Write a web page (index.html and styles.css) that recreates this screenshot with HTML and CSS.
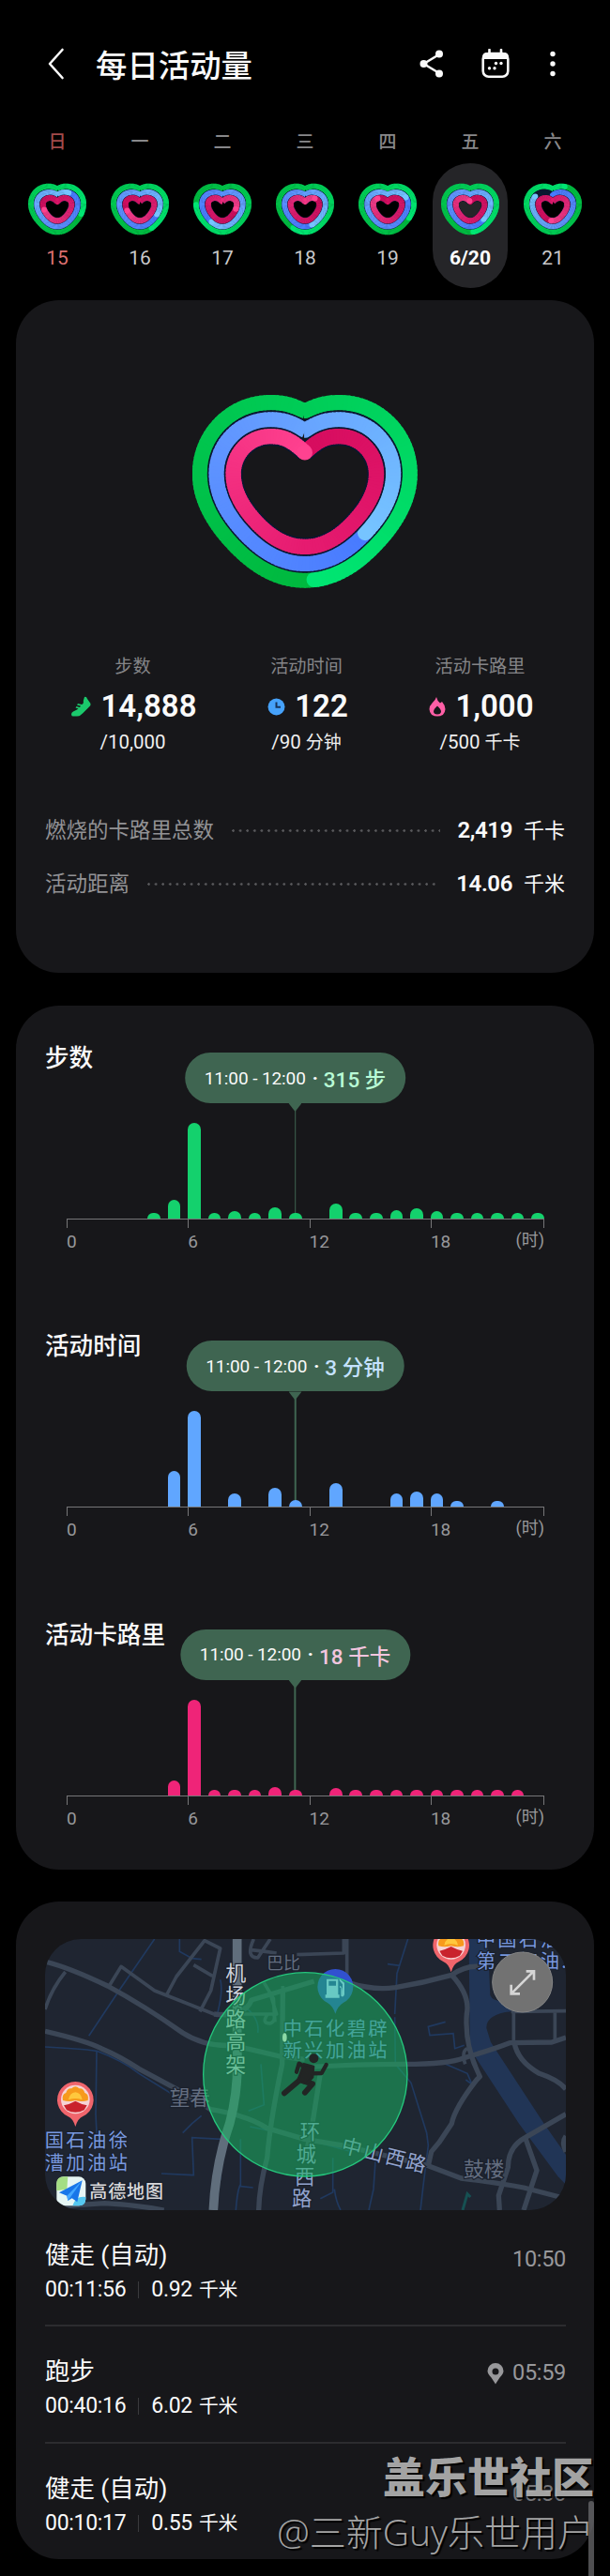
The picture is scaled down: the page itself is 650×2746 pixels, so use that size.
FILE: index.html
```html
<!DOCTYPE html>
<html lang="zh-CN">
<head>
    <meta charset="UTF-8">
    <meta name="viewport" content="width=device-width, initial-scale=1.0">
    <title>每日活动量</title>
    <link rel="stylesheet" href="styles.css">
</head>
<body>
    <header class="topbar">
        <svg class="back" width="18" height="34" viewBox="0 0 18 34"><path d="M15.500 2 L2 17 L15.500 32"/></svg>
        <h1>每日活动量</h1>
        <svg class="share" width="26" height="30" viewBox="0 0 26 30">
            <path d="M21 5 L4.500 15 L21 25"/>
            <circle cx="21" cy="4.500" r="4"/><circle cx="4.500" cy="15" r="4"/><circle cx="21" cy="25.500" r="4"/>
        </svg>
        <svg class="calendar" width="30" height="32" viewBox="0 0 30 32">
            <rect class="box" x="1.700" y="5" width="26.600" height="24.800" rx="6"/>
            <path class="fill" d="M1 11 V9 Q1 4 6 4 H24 Q29 4 29 9 V11 Z"/>
            <path class="box" d="M8.500 1 V6 M21 1 V6"/>
            <circle cx="15.500" cy="15.500" r="1.700"/><circle cx="21" cy="15.500" r="1.700"/>
            <circle cx="8.500" cy="20.700" r="1.700"/><circle cx="14" cy="20.700" r="1.700"/>
        </svg>
        <svg class="more" width="8" height="30" viewBox="0 0 8 30"><circle cx="4" cy="4.500" r="2.700"/><circle cx="4" cy="15" r="2.700"/><circle cx="4" cy="25.500" r="2.700"/></svg>
    </header>

    <nav class="week">
        <div class="day sunday"><span class="name">日</span><div class="pill"><svg class="heart" data-rings="0.3,0.1,0.71"></svg><span class="date">15</span></div></div>
        <div class="day"><span class="name">一</span><div class="pill"><svg class="heart" data-rings="0.42,0.32,0.7"></svg><span class="date">16</span></div></div>
        <div class="day"><span class="name">二</span><div class="pill"><svg class="heart" data-rings="0.76,0.6,0.28"></svg><span class="date">17</span></div></div>
        <div class="day"><span class="name">三</span><div class="pill"><svg class="heart" data-rings="0.58,0.44,0.13"></svg><span class="date">18</span></div></div>
        <div class="day"><span class="name">四</span><div class="pill"><svg class="heart" data-rings="0.33,0.17,0.87"></svg><span class="date">19</span></div></div>
        <div class="day selected"><span class="name">五</span><div class="pill"><svg class="heart" data-rings="0.48,0.37,0.99"></svg><span class="date">6/20</span></div></div>
        <div class="day"><span class="name">六</span><div class="pill"><svg class="heart" data-rings="0.08,-0.84,0.52"></svg><span class="date">21</span></div></div>
    </nav>

    <section class="card summary">
        <svg class="heart big" data-rings="0.485,0.365,1"></svg>
        <div class="stats">
            <div class="stat">
                <span class="label">步数</span>
                <div class="value">
                    <svg width="21" height="22" viewBox="0 0 21 22"><path fill="#1bc96c" d="M14 1 Q16 0 17 3 L20.500 8 Q21 10 19 11.500 L12 18.500 Q9.500 21.500 6 21.500 H2 Q0 21.500 0 19.500 Q0 17.500 2 16.500 L5.500 14.800 L7.500 13.500 L4.500 12.500 L5.500 11 L9 12 L10 10.500 L6 9.500 L7 8 L11 9 Q13.500 8 12.800 5 Z"/></svg>
                    14,888
                </div>
                <span class="goal">/10,000</span>
            </div>
            <div class="stat">
                <span class="label">活动时间</span>
                <div class="value">
                    <svg width="19" height="19" viewBox="0 0 19 19"><circle cx="9.500" cy="9.500" r="9" fill="#46a2fb"/><path d="M9.500 4.500 V9.800 H14" fill="none" stroke="#17345c" stroke-width="2"/></svg>
                    122
                </div>
                <span class="goal">/90 <span class="unit">分钟</span></span>
            </div>
            <div class="stat">
                <span class="label">活动卡路里</span>
                <div class="value">
                    <svg width="18" height="21" viewBox="0 0 18 21"><path fill="#ff5fa6" fill-rule="evenodd" d="M8 0 Q9 4.500 12 6.500 L14 5 Q17.500 9 17.500 13 Q17 20.500 9 20.500 Q1 20.500 .5 13 Q.5 9.500 3.500 6.500 Q7 3.500 8 0 Z M9 9.500 Q5 13 5 15.500 Q5.200 18.500 9 18.500 Q12.800 18.500 13 15.500 Q13 13 9 9.500 Z"/></svg>
                    1,000
                </div>
                <span class="goal">/500 <span class="unit">千卡</span></span>
            </div>
        </div>
        <div class="total"><span class="key">燃烧的卡路里总数</span><i class="dots"></i><b>2,419</b><span class="measure">千卡</span></div>
        <div class="total"><span class="key">活动距离</span><i class="dots"></i><b>14.06</b><span class="measure">千米</span></div>
    </section>

    <section class="card charts">
        <div class="chart steps" data-bars="0,0,0,0,6,20,102,6,8,6,12,6,0,16,6,6,9,11,8,6,6,6,6,6">
            <h2>步数</h2>
            <div class="tip"><span>11:00 - 12:00</span><em>·</em><b>315 步</b></div>
        </div>
        <div class="chart time" data-bars="0,0,0,0,0,38,102,0,14,0,20,7,0,25,0,0,14,16,14,6,0,6,0,0">
            <h2>活动时间</h2>
            <div class="tip"><span>11:00 - 12:00</span><em>·</em><b>3 分钟</b></div>
        </div>
        <div class="chart calories" data-bars="0,0,0,0,0,16,102,6,6,6,9,6,0,8,6,6,6,6,6,6,6,6,6,0">
            <h2>活动卡路里</h2>
            <div class="tip"><span>11:00 - 12:00</span><em>·</em><b>18 千卡</b></div>
        </div>
    </section>

    <section class="card log">
        <svg class="map" viewBox="0 0 1665 867">
            <defs>
                <g id="oil">
                    <path fill="#f0656c" d="M0 142 Q-8 115 -24 109 A58 58 0 1 1 24 109 Q8 115 0 142 Z"/>
                    <circle cy="55" r="46" fill="#f6d3d4"/>
                    <path fill="#f79a1c" d="M-40 58 Q-44 38 -30 34 Q-26 18 -12 20 Q0 8 12 20 Q26 18 30 34 Q44 38 40 58 Q20 64 0 58 Q-20 64 -40 58 Z"/>
                    <path fill="#ffc83d" d="M-22 56 Q-18 34 0 32 Q18 34 22 56 Q0 48 -22 56 Z"/>
                    <path fill="#c9222c" d="M-37 74 Q-18 70 0 60 Q18 70 37 74 L28 89 Q0 104 -28 89 Z"/>
                </g>
            </defs>
            <rect width="1665" height="867" fill="#1f2531"/>
            <!-- river and streams -->
            <g class="water">
                <path d="M1355 0 H1415 L1423 180 Q1435 205 1480 195 L1490 232 Q1410 240 1411 285 L1425 330 L1595 590 L1665 690 V785 L1640 760 L1515 590 L1358 350 Z" stroke="none" fill="#213556"/>
            </g>
            <g class="stream">
                <path d="M0 345 Q110 350 165 358 Q250 390 300 430 L400 492 M350 0 L240 160 L140 310 M165 360 L162 560 L166 640 M430 0 V40 L470 62 L500 65 M560 130 Q570 160 552 235 L548 250 M500 565 L470 590 L440 620 M565 640 L470 635 L475 755 L372 750 L470 755 M625 640 V785 Q615 800 610 867 M620 790 L665 795 M570 640 L560 770"/>
                <path d="M1160 0 L1125 110 L1118 240 M1095 80 L1135 85 M1280 265 L1225 280 L1230 308 L1305 302 L1310 350 L1340 340 M1118 250 L1120 400 L1170 460 L1220 620 L1225 660 L1210 780 L1200 867 M1280 400 L1350 430 L1365 465 L1345 450 M1056 710 L1050 800 L1035 867 M920 700 V810 L880 830 M925 800 Q930 840 945 867 M690 400 L700 530 L650 550"/>
                <path d="M600 190 Q690 240 680 300 M655 600 L780 625 L980 680" />
                <path d="M1335 867 L1350 815 L1360 825" stroke="#165052" stroke-width="9"/>
            </g>
            <g class="road thin">
                <path d="M205 150 L243 88 L350 165 L540 240 L600 248 M388 180 L420 120 L510 5 L560 30 L530 165 L495 232 M475 83 L535 118 M667 0 Q640 60 680 60 L720 0 M660 35 L705 40 L740 45 M0 225 Q20 160 65 105"/>
                <path d="M805 50 L955 45 V0 M965 0 V130 M760 150 V267 M700 140 L730 190 L735 265 M720 175 L740 240 H600 M712 240 Q690 270 720 270 Q740 262 730 235"/>
                <path d="M1498 180 V330 M1490 232 L1665 230 M1630 232 V330 M1343 400 Q1330 360 1350 350"/>
            </g>
            <g class="road">
                <path d="M0 72 Q75 90 200 150 Q320 215 440 300 Q510 345 600 340 Q690 360 750 375 L830 385"/>
                <path d="M0 295 Q130 325 180 350 Q240 375 300 415 L440 490 L530 545 Q650 565 710 605 L830 640 L950 660 L1225 725 L1330 765 Q1450 780 1530 795 L1665 830"/>
                <path d="M540 240 Q640 250 660 195 L860 135 M970 140 Q1050 165 1120 155 Q1210 140 1300 115 Q1350 80 1400 90"/>
                <path d="M830 410 Q1000 400 1150 400 Q1290 400 1340 380 Q1440 350 1485 332 L1620 330 L1665 315"/>
                <path d="M1300 115 Q1360 180 1348 240 Q1340 340 1390 440 L1380 450 Q1310 540 1300 590 L1260 650 L1235 680 L1225 725"/>
                <path d="M1500 330 Q1510 390 1580 430 Q1640 450 1665 480 M1665 560 L1535 635 Q1480 665 1480 730 L1450 820 L1453 867 M1535 635 L1572 740 L1530 867 M1665 630 Q1650 650 1665 680"/>
                <path d="M760 170 L758 400 Q720 580 710 700 Q685 790 683 867 M880 430 L850 620 L830 700"/>
                <path d="M0 860 Q100 850 190 845 Q290 850 380 867"/>
            </g>
            <path d="M614 0 V350 Q620 480 590 590 Q545 720 538 867" class="highway"/>
            <text class="grey" x="708" y="97">巴比</text>
            <text class="grey large" x="398" y="530">望春</text>
            <text class="grey large" x="1338" y="758">鼓楼</text>
            <g class="poi">
                <text x="-1" y="667">国石油徐</text><text x="-1" y="738">漕加油站</text>
                <text x="1379" y="23">中国石油</text><text x="1379" y="92">第二加油..</text>
            </g>
            <g transform="translate(97 458)"><use href="#oil"/></g>
            <g transform="translate(1298 -36)"><use href="#oil"/></g>
            <g class="street">
                <text x="577" y="131">机</text><text x="577" y="204">场</text><text x="577" y="278">路</text><text x="577" y="351">高</text><text x="577" y="425">架</text>
                <g class="blue">
                    <text x="815" y="639">环</text><text x="803" y="711">城</text><text x="798" y="782">西</text><text x="789" y="852">路</text>
                    <g transform="translate(944 680) rotate(14)"><text x="0" y="0">中</text><text x="72" y="0">山</text><text x="144" y="0">西</text><text x="212" y="0">路</text></g>
                </g>
            </g>
            <path fill="#3151cf" d="M928 239 Q920 214 903 204 A57 57 0 1 1 953 204 Q936 214 928 239 Z"/>
            <g class="poi"><text x="761" y="309">中石化碧辟</text><text x="761" y="379">新兴加油站</text></g>
            <circle class="area" cx="832" cy="433" r="326"/>
            <path fill="#68c9c3" fill-rule="evenodd" d="M900 128 H937 V178 H941 V188 H896 V178 H900 Z M907 134 H930 V149 H907 Z M941 127 L957 140 V178 Q954 188 946 182 V155 H942 V150 Q952 150 951 178 V145 L941 133 Z"/>
            <ellipse cx="766" cy="315" rx="7" ry="14" fill="#8bd8a5"/>
            <g class="runner">
                <circle cx="859" cy="382" r="15"/>
                <path d="M838 416 L811 454 L765 493"/><path d="M842 418 L812 398 L804 425" class="arm"/><path d="M850 430 L884 429 L899 402" class="arm"/><path d="M826 454 L855 463 L831 491"/>
                <path d="M827 400 L858 408 L855 442 L836 462 L808 454 Z" stroke-width="8"/>
            </g>
            <circle cx="1526" cy="138" r="96" fill="#727272" stroke="#858585" stroke-width="3"/>
            <path class="expand" d="M1493 172 L1562 103 M1538 103 H1563 V131 M1490 146 V175 H1518"/>
            <rect x="37" y="760" width="93" height="93" rx="22" fill="#e7f6f4"/>
            <path fill="#a4de84" d="M37 805 V780 Q38 760 60 760 H73 L70 800 Z"/>
            <path fill="#55c7ef" d="M88 853 Q98 820 130 825 V833 Q128 853 108 853 Z"/>
            <path fill="#1976e9" d="M119 772 L45 811 L70 821 L73 837 L86 829 L103 841 Z"/><path fill="#45a8ff" d="M119 772 L70 821 L73 837 Z"/>
            <text class="brand" x="142" y="829" textLength="236">高德地图</text>
        </svg>
        <div class="entry">
            <div><h3>健走 (自动)</h3><p>00:11:56<i></i>0.92 <span>千米</span></p></div>
            <time>10:50</time>
        </div>
        <div class="entry">
            <div><h3>跑步</h3><p>00:40:16<i></i>6.02 <span>千米</span></p></div>
            <time class="middle"><svg width="18" height="23" viewBox="0 0 18 23"><path fill-rule="evenodd" d="M9 22.500 Q7.500 20 4.500 15.500 Q.5 11.500 .5 8.500 A8.500 8.500 0 0 1 17.500 8.500 Q17.500 11.500 13.500 15.500 Q10.500 20 9 22.500 Z M9 5.500 A3.500 3.500 0 1 0 9 12.500 A3.500 3.500 0 1 0 9 5.500 Z"/></svg>05:59</time>
        </div>
        <div class="entry">
            <div><h3>健走 (自动)</h3><p>00:10:17<i></i>0.55 <span>千米</span></p></div>
            <time class="low">05:36</time>
        </div>
    </section>

    <div class="watermark"><strong>盖乐世社区</strong><span>@三新Guy乐世用户</span></div>
    <div class="scrollbar"></div>

    <script src="script.js"></script>
</body>
</html>
```
FILE: styles.css
```css
* { box-sizing: border-box; }
body {
    position: relative;
    margin: 0;
    width: 650px;
    height: 2746px;
    overflow: hidden;
    padding: 38px 17px 0;
    background: #000;
    color: #fafafa;
    font-family: Roboto, "Noto Sans CJK SC", sans-serif;
}
h1, h2, h3, p { margin: 0; }
svg { display: block; flex: none; }

.topbar {
    display: flex;
    align-items: center;
    height: 60px;
    padding: 0 40px 0 34px;
}
.topbar h1 {
    flex: 1;
    margin-left: 33px;
    font-size: 33.4px;
    font-weight: 500;
    font-family: "Noto Sans CJK SC", sans-serif;
    line-height: 60px;
}
.topbar circle, .topbar .fill { fill: #fafafa; }
.back path, .share path, .calendar .box {
    fill: none;
    stroke: #fafafa;
    stroke-width: 2.6;
    stroke-linecap: round;
    stroke-linejoin: round;
}
.share { margin-right: 40px; }
.calendar { margin-right: 42px; }

.week {
    display: grid;
    grid-template-columns: repeat(7, 88px);
    padding-top: 40px;
}
.day { display: flex; flex-direction: column; align-items: center; }
.day .name {
    height: 36px;
    line-height: 28px;
    font-size: 19px;
    font-weight: 500;
    color: #88888a;
}
.pill {
    display: flex;
    flex-direction: column;
    align-items: center;
    width: 80px;
    height: 133px;
    padding-top: 21px;
    border-radius: 40px;
}
.pill .heart { width: 62px; height: 56px; }
.date {
    margin-top: 10px;
    font-size: 21px;
    line-height: 28px;
    color: #c9c9cb;
}
.sunday .name { color: #a34b4b; }
.sunday .date { color: #dd7070; }
.selected .pill { background: #252528; }
.selected .date { color: #fff; font-weight: 700; }

.card {
    background: #17171a;
    border-radius: 46px;
}
.summary {
    height: 717px;
    margin-top: 13px;
    padding: 101px 31px 0;
}
.heart.big {
    width: 240px;
    height: 206px;
    margin: 0 auto;
}
.stats {
    display: grid;
    grid-template-columns: repeat(3, 185px);
    height: 230px;
    margin-left: 1px;
    padding-top: 71px;
    text-align: center;
}
.stat { display: flex; flex-direction: column; align-items: center; }
.label { font-size: 19.2px; line-height: 26px; color: #858588; }
.value {
    display: flex;
    align-items: center;
    gap: 10px;
    height: 36px;
    margin: 11px -3px 7px 0;
    font-size: 33px;
    font-weight: 600;
    line-height: 36px;
}
.goal { font-size: 20.500px; line-height: 26px; color: #f0f0f0; }
.unit { font-size: 19px; }
.total {
    display: flex;
    align-items: center;
    height: 57px;
    line-height: 57px;
    font-size: 22.500px;
}
.key { color: #929295; }
.dots {
    flex: 1;
    height: 3px;
    margin: 0 19px;
    background: radial-gradient(circle at 1.500px 1.500px, #58585b 1.100px, transparent 1.500px) 0 0 / 7.600px 3px;
}
.total b { font-size: 24px; font-weight: 600; letter-spacing: -.4px; }
.measure { margin-left: 12px; font-size: 22px; }

.charts {
    height: 921px;
    margin-top: 35px;
    overflow: hidden;
}
.chart {
    position: relative;
    height: 307.400px;
    padding: 37px 53px 0 54px;
}
.chart h2 {
    height: 92px;
    margin-left: -23px;
    font-size: 25.600px;
    font-weight: 500;
    line-height: 38px;
}
.tip {
    position: absolute;
    left: 297.500px;
    top: 50px;
    display: flex;
    align-items: center;
    height: 54px;
    padding: 0 21px;
    border-radius: 27px;
    background: #3f6551;
    transform: translateX(-50%);
    white-space: nowrap;
    font-size: 19px;
}
.tip::before {
    content: "";
    position: absolute;
    left: 50%;
    top: 54px;
    width: 14px;
    height: 9px;
    margin-left: -7px;
    background: #3f6551;
    clip-path: polygon(0 0, 100% 0, 50% 100%);
}
.tip::after {
    content: "";
    position: absolute;
    left: 50%;
    top: 60px;
    width: 1.500px;
    height: 112px;
    margin-left: -.7px;
    background: #3f6551;
}
.tip span { letter-spacing: -.1px; }
.tip em { margin: 0 6px 0 7px; font-style: normal; font-weight: 900; }
.tip b { font-size: 22.500px; font-weight: 500; }
.steps { --bar: #14d16d; }
.time { --bar: #60a6ff; }
.calories { --bar: #ef2478; }
.steps b { color: #b9fbd6; }
.time b { color: #c5e2ff; }
.calories b { color: #f3c5df; }
.bars {
    display: flex;
    justify-content: space-between;
    align-items: flex-end;
    height: 99px;
    border-bottom: 1.500px solid #767678;
}
.bars i {
    position: relative;
    z-index: 1;
    width: 13.700px;
    background: var(--bar);
    border-radius: 7px 7px 0 0;
}
.axis {
    display: grid;
    grid-template-columns: 129.300px 129.300px 129.300px 1fr;
    line-height: 25px;
    font-size: 19px;
    color: #98989a;
}
.axis span { position: relative; padding-top: 11px; }
.axis span::before {
    content: "";
    position: absolute;
    left: 0;
    top: 0;
    height: 9px;
    border-left: 1.500px solid #767678;
}
.axis .hour { position: absolute; right: 53px; padding-top: 9px; font-size: 18px; }
.axis .hour::before { left: auto; right: 0; }

.log {
    height: 701px;
    margin-top: 34px;
    padding: 40px 30px 0 31px;
}
.map {
    width: 555px;
    height: 289px;
    border-radius: 38px;
    overflow: hidden;
    font-family: "Noto Sans CJK SC", sans-serif;
}
.stream { fill: none; stroke: #20395f; stroke-width: 5; }
.road { fill: none; stroke: #3b4656; stroke-width: 16; stroke-linejoin: round; }
.road.thin { stroke-width: 11; }
.highway { fill: none; stroke: #606e7c; stroke-width: 29; }
.map text { paint-order: stroke; stroke: #1a202c; stroke-width: 7px; }
.grey { fill: #646e80; font-size: 54px; }
.grey.large { font-size: 65px; }
.poi { fill: #7898df; font-size: 61px; letter-spacing: 7px; }
.street { fill: #cfd3dd; font-size: 66px; }
.street .blue { fill: #93a4ce; font-size: 64px; }
.map .brand { fill: #d8d8da; font-size: 57px; font-weight: 500; }
.area { fill: rgba(26, 174, 98, .56); stroke: #25c77d; stroke-width: 4; }
.runner { fill: #222524; stroke: #222524; stroke-width: 18; stroke-linecap: round; stroke-linejoin: round; }
.runner path { fill: none; }
.runner path:last-child { fill: #222524; }
.runner .arm { stroke-width: 13; }
.runner circle { stroke: none; }
.expand { fill: none; stroke: #d5d5d5; stroke-width: 8; }

.entry {
    display: flex;
    justify-content: space-between;
    height: 124.300px;
    padding-top: 29px;
    border-bottom: 2px solid #2c2c2f;
}
.entry:last-child { border: none; }
.entry h3 { font-size: 26.400px; font-weight: 400; line-height: 38px; }
.entry p { display: flex; align-items: center; font-size: 23px; line-height: 36px; letter-spacing: -.3px; }
.entry p i { width: 1px; height: 18px; margin: 0 13px; background: #3a3a3d; }
.entry p span { margin-left: 7px; font-size: 20.800px; }
.entry time {
    display: flex;
    gap: 9px;
    height: 30px;
    margin-top: 8px;
    font-size: 23.500px;
    line-height: 30px;
    letter-spacing: -.3px;
    color: #98989b;
}
.entry time.middle { margin-top: 5px; }
.entry time.low { margin-top: 9px; color: #77777a; }
.entry time svg { margin-top: 5px; fill: #98989b; }

.watermark {
    position: absolute;
    right: 17px;
    top: 2609px;
    display: flex;
    flex-direction: column;
    align-items: flex-end;
    font-family: "Noto Sans CJK SC", sans-serif;
    color: rgba(180, 180, 180, .92);
    text-shadow: 2px 2px 1px #000;
    white-space: nowrap;
}
.watermark strong { font-size: 45px; font-weight: 900; line-height: 60px; }
.watermark span { font-family: "Open Sans", "Noto Sans CJK SC", sans-serif; font-size: 39px; font-weight: 300; line-height: 60px; }
.scrollbar {
    position: absolute;
    right: 17px;
    top: 2666px;
    width: 6px;
    height: 80px;
    border-radius: 3px 3px 0 0;
    background: rgba(120, 120, 123, .65);
}
```
FILE: script.js
```js
const NS = "http://www.w3.org/2000/svg";

// ring colours run from the start of the lap to its head
const COLORS = [
    [[0, 184, 62], [0, 204, 86], [0, 230, 115]],
    [[72, 122, 255], [98, 152, 255], [118, 196, 255]],
    [[214, 12, 94], [230, 27, 112], [255, 66, 144]]
];

const BIG = {
    box: "166 123 721 618", cx: 526, stroke: 49, gap: 5, side: 375,
    rings: [
        { w: 336, h: 110, top: 147, notch: 175, bottom: 716 },
        { w: 283, h: 110, top: 202, notch: 237, bottom: 663 },
        { w: 229, h: 110, top: 255, notch: 307, bottom: 609 }
    ]
};
const SMALL = {
    box: "90 46 186 166", cx: 183, stroke: 18, gap: 1.5, side: 112,
    rings: [
        { w: 84, h: 28, top: 56, notch: 65, bottom: 202 },
        { w: 65, h: 26, top: 75, notch: 84, bottom: 184 },
        { w: 46, h: 23, top: 93, notch: 105, bottom: 166 }
    ]
};

function ringPath(cx, side, r) {
    const H = r.bottom - side;
    const half = [
        [0, r.notch], [.4 * r.h, r.notch - .8 * (r.notch - r.top)], [.65 * r.h, r.top], [r.h, r.top],
        [r.h + .56 * (r.w - r.h), r.top], [r.w, side - .55 * (side - r.top)], [r.w, side],
        [r.w, side + .25 * H], [.86 * r.w, side + .48 * H], [.65 * r.w, side + .69 * H],
        [.46 * r.w, side + .88 * H], [.25 * r.w, r.bottom], [0, r.bottom]
    ];
    const left = half.slice(0, -1).reverse().map(p => [-p[0], p[1]]);
    const pts = half.concat(left).map(p => (cx + p[0]) + " " + p[1]);
    return "M" + pts[0] + " C" + pts.slice(1).join(" ");
}

function mix(stops, t) {
    const i = t < .5 ? 0 : 1;
    const k = t * 2 - i;
    return "rgb(" + stops[i].map((c, n) => Math.round(c + (stops[i + 1][n] - c) * k)).join(",") + ")";
}

function add(svg, tag, attrs) {
    const el = document.createElementNS(NS, tag);
    for (const key in attrs) el.setAttribute(key, attrs[key]);
    svg.appendChild(el);
    return el;
}

document.querySelectorAll(".heart").forEach(svg => {
    const size = svg.classList.contains("big") ? BIG : SMALL;
    svg.setAttribute("viewBox", size.box);
    svg.dataset.rings.split(",").map(Number).forEach((head, n) => {
        const d = ringPath(size.cx, size.side, size.rings[n]);
        const guide = add(svg, "path", { d, fill: "none", stroke: n ? "#0b1730" : "none", "stroke-linejoin": "round", "stroke-width": size.stroke + size.gap * 2 });
        const total = guide.getTotalLength();
        // a negative head is a ring that has not closed yet
        const span = head < 0 ? -head : 1;
        const end = Math.abs(head);
        const at = f => guide.getPointAtLength(((f % 1 + 1) % 1) * total);
        const STEPS = 150;
        for (let i = 0; i < STEPS; i++) {
            const a = at(end - span + span * i / STEPS);
            const m = at(end - span + span * (i + .5) / STEPS);
            const b = at(end - span + span * Math.min(STEPS, i + 1.4) / STEPS);
            add(svg, "path", {
                d: `M${a.x} ${a.y} L${m.x} ${m.y} L${b.x} ${b.y}`,
                fill: "none", stroke: mix(COLORS[n], i / STEPS), "stroke-width": size.stroke,
                "stroke-linejoin": "round",
                "stroke-linecap": i === 0 && head < 0 ? "round" : "butt"
            });
        }
        const p = at(end);
        add(svg, "circle", { cx: p.x, cy: p.y, r: size.stroke / 2, fill: mix(COLORS[n], 1) });
    });
});

document.querySelectorAll(".chart").forEach(chart => {
    const bars = chart.dataset.bars.split(",").map(h => `<i style="height:${h}px"></i>`).join("");
    chart.insertAdjacentHTML("beforeend",
        `<div class="bars">${bars}</div><div class="axis"><span>0</span><span>6</span><span>12</span><span>18</span><span class="hour">(时)</span></div>`);
});
```
